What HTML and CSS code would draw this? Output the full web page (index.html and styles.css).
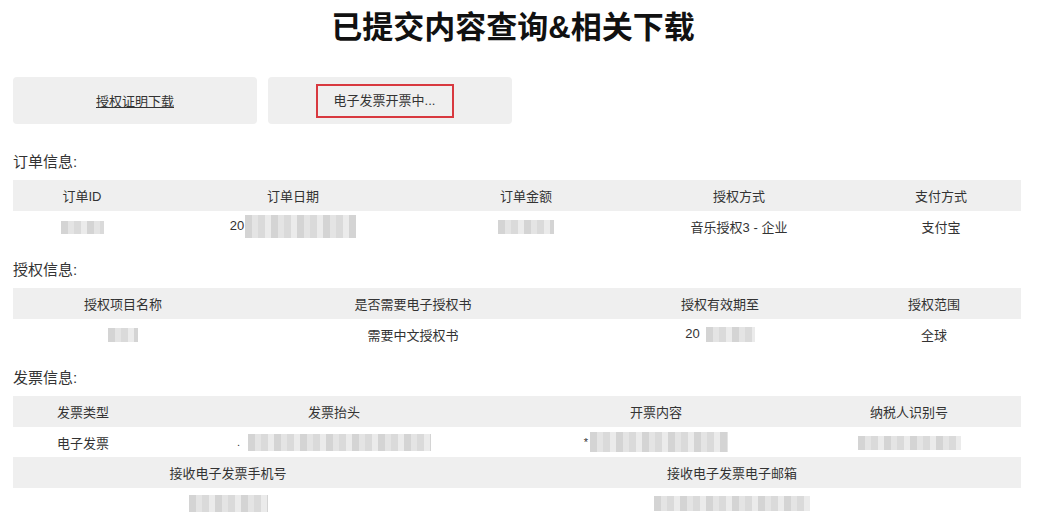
FILE: index.html
```html
<!DOCTYPE html>
<html>
<head>
    <meta charset="utf-8">
    <title>已提交内容查询&amp;相关下载</title>
    <meta name="viewport" content="width=device-width, initial-scale=1.0">
    <link rel="stylesheet" href="styles.css">
</head>
<body>
    <div class="container">
        <h1>已提交内容查询&amp;相关下载</h1>

        <div class="button-row">
            <a class="action" href="#"><span class="link">授权证明下载</span></a>
            <div class="action"><span class="pending">电子发票开票中...</span></div>
        </div>

        <div class="section-title">订单信息:</div>
        <table class="info order">
            <colgroup>
                <col class="c1"><col class="c2"><col class="c3"><col class="c4"><col class="c5">
            </colgroup>
            <tr class="head">
                <td>订单ID</td>
                <td>订单日期</td>
                <td>订单金额</td>
                <td>授权方式</td>
                <td>支付方式</td>
            </tr>
            <tr>
                <td><span class="mask mask-id"></span></td>
                <td>20<span class="mask mask-date"></span></td>
                <td><span class="mask mask-amount"></span></td>
                <td>音乐授权3 - 企业</td>
                <td>支付宝</td>
            </tr>
        </table>

        <div class="section-title">授权信息:</div>
        <table class="info license">
            <colgroup>
                <col class="c1"><col class="c2"><col class="c3"><col class="c4">
            </colgroup>
            <tr class="head">
                <td>授权项目名称</td>
                <td>是否需要电子授权书</td>
                <td>授权有效期至</td>
                <td>授权范围</td>
            </tr>
            <tr>
                <td><span class="mask mask-name"></span></td>
                <td>需要中文授权书</td>
                <td>20<span class="mask mask-valid"></span></td>
                <td>全球</td>
            </tr>
        </table>

        <div class="section-title">发票信息:</div>
        <table class="info invoice">
            <colgroup>
                <col class="c1"><col class="c2"><col class="c3"><col class="c4">
            </colgroup>
            <tr class="head">
                <td>发票类型</td>
                <td>发票抬头</td>
                <td>开票内容</td>
                <td>纳税人识别号</td>
            </tr>
            <tr>
                <td>电子发票</td>
                <td><span class="dot">.</span><span class="mask mask-title"></span></td>
                <td><span class="star">*</span><span class="mask mask-content"></span></td>
                <td><span class="mask mask-tax"></span></td>
            </tr>
        </table>
        <table class="info receive">
            <colgroup>
                <col class="c1"><col class="c2">
            </colgroup>
            <tr class="head">
                <td>接收电子发票手机号</td>
                <td>接收电子发票电子邮箱</td>
            </tr>
            <tr>
                <td><span class="mask mask-phone"></span></td>
                <td><span class="mask mask-mail"></span></td>
            </tr>
        </table>
    </div>
</body>
</html>
```

FILE: styles.css
```css
body {
    margin: 0;
    font-family: "Liberation Sans", "Noto Sans CJK SC", sans-serif;
    color: #333;
    background: #fff;
}

.container {
    width: 1008px;
    margin-left: 13px;
    padding-top: 8px;
}

h1 {
    margin: 0 0 29px;
    padding-right: 8px;
    font-size: 31px;
    line-height: 40px;
    font-weight: bold;
    color: #111;
    text-align: center;
}

.button-row {
    display: flex;
    gap: 11px;
    margin-bottom: 28px;
}

.action {
    width: 244px;
    height: 47px;
    display: flex;
    align-items: center;
    justify-content: center;
    background-color: #efefef;
    border-radius: 4px;
    font-size: 13px;
    color: #333;
    text-decoration: none;
}

.action .link {
    text-decoration: underline;
}

.action .pending {
    display: inline-block;
    padding: 7px 17px 7px 16px;
    margin-right: 10px;
    border: 2px solid #d8393f;
    line-height: 16px;
}

.section-title {
    font-size: 15px;
    line-height: 20px;
    margin-bottom: 8px;
    color: #333;
}

table.info {
    width: 1008px;
    table-layout: fixed;
    border-collapse: collapse;
    margin-bottom: 19px;
    font-size: 13px;
}

table.info td {
    height: 30px;
    padding: 0;
    text-align: center;
    vertical-align: middle;
    white-space: nowrap;
    color: #333;
}

table.info tr.head td {
    height: 31px;
    background-color: #efefef;
}

.order .c1 { width: 138px; }
.order .c2 { width: 284px; }
.order .c3 { width: 182px; }
.order .c4 { width: 244px; }
.order .c5 { width: 160px; }

.license .c1 { width: 220px; }
.license .c2 { width: 360px; }
.license .c3 { width: 254px; }
.license .c4 { width: 174px; }

table.invoice { margin-bottom: 0; }
.invoice .c1 { width: 140px; }
.invoice .c2 { width: 362px; }
.invoice .c3 { width: 282px; }
.invoice .c4 { width: 224px; }

.receive .c1 { width: 430px; }
.receive .c2 { width: 578px; }

.mask {
    display: inline-block;
    vertical-align: middle;
    height: 14px;
    background: repeating-linear-gradient(90deg, #d4d4d4 0 7px, #e4e4e4 7px 13px, #dadada 13px 20px, #ebebeb 20px 26px);
}

.mask-id { width: 43px; height: 13px; }
.mask-date { width: 111px; height: 23px; margin-left: 1px; }
.mask-amount { width: 56px; }
.mask-name { width: 30px; }
.mask-valid { width: 49px; height: 15px; margin-left: 6px; }
.mask-title { width: 183px; height: 17px; margin-left: 8px; }
.mask-content { width: 138px; height: 20px; margin-left: 2px; }
.mask-tax { width: 103px; }
.mask-phone { width: 79px; height: 17px; }
.mask-mail { width: 156px; height: 15px; }

.dot,
.star {
    font-size: 11px;
    vertical-align: middle;
    color: #333;
}
```
